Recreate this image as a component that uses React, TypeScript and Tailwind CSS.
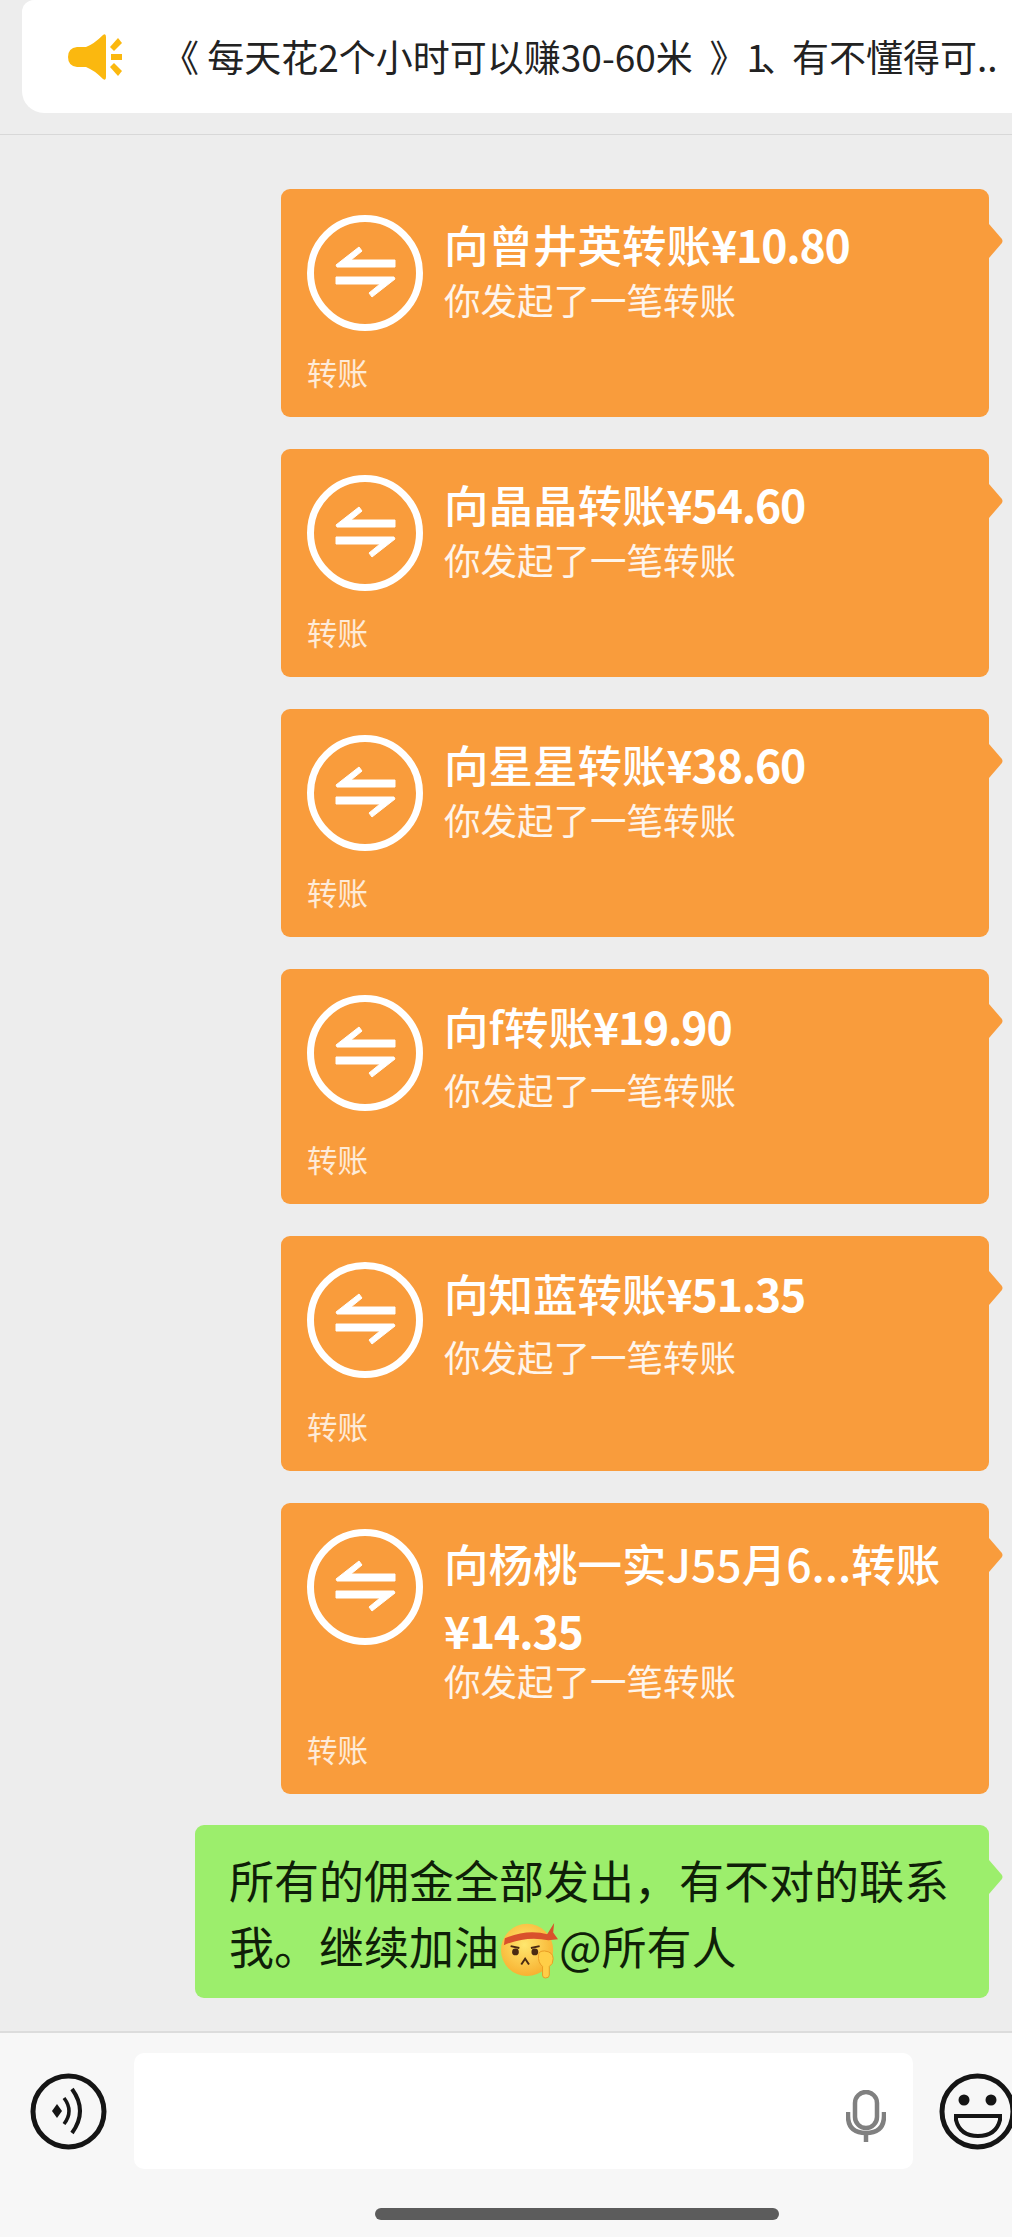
interface Transfer {
  name: string
  amount: string
  wrap?: boolean
  titleClass: string
  subClass: string
  footerClass: string
}

const transfers: Transfer[] = [
  { name: '向曾井英转账', amount: '¥10.80', titleClass: 'leading-[58px]', subClass: 'leading-[54px]', footerClass: 'mt-[19px]' },
  { name: '向晶晶转账', amount: '¥54.60', titleClass: 'leading-[58px]', subClass: 'leading-[54px]', footerClass: 'mt-[19px]' },
  { name: '向星星转账', amount: '¥38.60', titleClass: 'leading-[58px]', subClass: 'leading-[54px]', footerClass: 'mt-[19px]' },
  { name: '向f转账', amount: '¥19.90', titleClass: 'leading-[62px]', subClass: 'mt-[7px] leading-[52px]', footerClass: 'mt-[21px]' },
  { name: '向知蓝转账', amount: '¥51.35', titleClass: 'leading-[62px]', subClass: 'mt-[7px] leading-[52px]', footerClass: 'mt-[21px]' },
  { name: '向杨桃一实J55月6...转账', amount: '¥14.35', wrap: true, titleClass: 'leading-[67px]', subClass: 'leading-[36px]', footerClass: 'mt-[28px]' },
]

function Tail({ className }: { className: string }) {
  return (
    <svg viewBox="0 0 15 34" className={`absolute left-full top-[35px] h-[34px] w-[15px] ${className}`}>
      <path d="M0 0 L12.5 14.5 Q14.5 17 12.5 19.5 L0 34 Z" fill="currentColor" />
    </svg>
  )
}

function TransferIcon() {
  return (
    <svg viewBox="0 0 116 116" className="h-[116px] w-[116px] shrink-0">
      <circle cx="58" cy="58" r="54.5" fill="none" stroke="#fff" strokeWidth="7" />
      <path
        d="M29 50 L52 32 L55 36 L44 45 H88 V52 H30 Z"
        fill="#fff"
        stroke="#fff"
        strokeWidth="1"
        strokeLinejoin="round"
      />
      <path
        d="M88 64 L65 82 L62 78 L73 69 H29 V62 H87 Z"
        fill="#fff"
        stroke="#fff"
        strokeWidth="1"
        strokeLinejoin="round"
      />
    </svg>
  )
}

function TransferCard({ name, amount, wrap, titleClass, subClass, footerClass }: Transfer) {
  return (
    <div className="relative w-[708px] rounded-[9px] bg-[#f99c3c] pb-[23px] pl-[26px] pt-[26px] text-white">
      <Tail className="text-[#f99c3c]" />
      <div className="flex gap-[21px]">
        <TransferIcon />
        <div className="min-w-0">
          <div className={`text-[44.5px] font-medium ${titleClass}`}>
            {name}
            {wrap && <br />}
            <span className="font-semibold tracking-[-1.2px]">{amount}</span>
          </div>
          <div className={`text-[36.5px] text-white/90 ${subClass}`}>你发起了一笔转账</div>
        </div>
      </div>
      <div className={`text-[30.5px] leading-[44px] text-white/80 ${footerClass}`}>转账</div>
    </div>
  )
}

function SpeakerIcon() {
  return (
    <svg viewBox="0 0 54 46" className="h-[46px] w-[54px] shrink-0" fill="#fbb80f">
      <path d="M35 1 Q38 -1 38 3 V43 Q38 47 35 45 Q26 36 18 33 H9 Q0 32 0 23 Q0 14 9 13 H18 Q26 10 35 1 Z" />
      <path d="M42 13 L50 4 L54 9 L46 17 Z" />
      <path d="M43 20 H54 V26 H43 Z" />
      <path d="M42 33 L46 29 L54 37 L50 42 Z" />
    </svg>
  )
}

function VoiceIcon() {
  return (
    <svg viewBox="0 0 77 77" className="h-[77px] w-[77px] shrink-0" fill="none" stroke="#151515">
      <circle cx="38.5" cy="38.5" r="35.5" strokeWidth="5" />
      <path d="M22 38 L27 31 L32 38 L27 45 Z" fill="#151515" stroke="none" />
      <path d="M34 25 Q44 38 34 51" strokeWidth="3.5" />
      <path d="M42 16 Q58 38 42 60" strokeWidth="4" />
    </svg>
  )
}

function MicIcon() {
  return (
    <svg viewBox="0 0 40 52" className="mt-[10px] h-[52px] w-[40px] shrink-0" fill="none" stroke="#808080" strokeWidth="4.5">
      <rect x="9" y="2" width="22" height="36" rx="11" />
      <path d="M2 22 V26 Q2 43 20 43 Q38 43 38 26 V22" />
      <path d="M20 43 V52" />
    </svg>
  )
}

function SmileIcon() {
  return (
    <svg viewBox="0 0 77 77" className="h-[77px] w-[77px] shrink-0" fill="none" stroke="#151515">
      <circle cx="38.5" cy="38.5" r="35.5" strokeWidth="5" />
      <circle cx="25" cy="27" r="5.5" fill="#151515" stroke="none" />
      <circle cx="52" cy="27" r="5.5" fill="#151515" stroke="none" />
      <path d="M17 43 H61 V47 Q57 63 39 63 Q21 63 17 47 Z" strokeWidth="4" />
    </svg>
  )
}

function PointingEmoji() {
  return (
    <svg viewBox="0 0 60 60" className="mx-[1px] inline h-[60px] w-[58px] align-[-14px]">
      <defs>
        <radialGradient id="face" cx="45%" cy="40%" r="70%">
          <stop offset="0%" stopColor="#ffe76e" />
          <stop offset="100%" stopColor="#f7a928" />
        </radialGradient>
      </defs>
      <circle cx="28" cy="31" r="27" fill="url(#face)" />
      <path d="M5 19 Q28 9 50 15 L50 21 Q28 16 4 26 Z" fill="#d9512c" />
      <path d="M48 16 L56 3 L55 13 L60 20 L50 21 Z" fill="#d9512c" />
      <circle cx="16" cy="33" r="3.5" fill="#4a2a12" />
      <circle cx="36" cy="33" r="3.5" fill="#4a2a12" />
      <path d="M11 27 L20 29 M41 27 L32 29" stroke="#4a2a12" strokeWidth="2" />
      <path d="M22 46 L26 40 L30 46" fill="none" stroke="#4a2a12" strokeWidth="2" />
      <path d="M40 36 Q40 32 46 32 Q55 33 55 40 Q55 46 51 48 V57 Q51 60 47 60 Q44 60 44 57 V48 Q39 44 40 36 Z" fill="#ffce47" stroke="#e89a22" strokeWidth="1" />
    </svg>
  )
}

export default function App() {
  return (
    <div className="flex h-[2237px] w-[1012px] flex-col overflow-hidden bg-[#ededed] font-['Noto_Sans_CJK_SC','Noto_Sans',sans-serif]">
      {/* Pinned notice */}
      <div className="h-[135px] shrink-0 border-b border-[#d8d8d8]">
        <div className="ml-[22px] flex h-[113px] items-center overflow-hidden rounded-bl-[22px] rounded-tl-[12px] bg-white pl-[46px]">
          <SpeakerIcon />
          <div className="ml-[40px] whitespace-nowrap text-[37px] text-[#222222]">
            {'《 每天花2个小时可以赚30-60米\u00A0\u00A0》'}
            <span className="tracking-[-6px]">1、</span>
            有不懂得可..
          </div>
        </div>
      </div>

      {/* Messages */}
      <div className="flex flex-1 flex-col items-end gap-[32px] pr-[23px] pt-[54px]">
        {transfers.map((t, i) => (
          <TransferCard key={i} {...t} />
        ))}
        <div className="relative -mt-[1px] w-[794px] rounded-[9px] bg-[#9cee6c] pb-[19px] pl-[34px] pt-[22px] text-[45px] leading-[66px] text-[#0f1f08]">
          <Tail className="text-[#9cee6c]" />
          {'所有的佣金全部发出\uFF0C有不对的联系'}
          <br />
          我。继续加油
          <PointingEmoji />
          @所有人
        </div>
      </div>

      {/* Composer */}
      <div className="h-[206px] shrink-0 border-t-2 border-[#dcdcdc] bg-[#f7f7f7] pt-[20px]">
        <div className="flex items-center pl-[30px]">
          <VoiceIcon />
          <div className="ml-[27px] flex h-[116px] w-[779px] shrink-0 items-center justify-end rounded-[10px] bg-white pr-[27px]">
            <MicIcon />
          </div>
          <div className="ml-[26px]">
            <SmileIcon />
          </div>
        </div>
        <div className="ml-[375px] mt-[39px] h-[12px] w-[404px] rounded-full bg-[#5c5c5c]" />
      </div>
    </div>
  )
}
